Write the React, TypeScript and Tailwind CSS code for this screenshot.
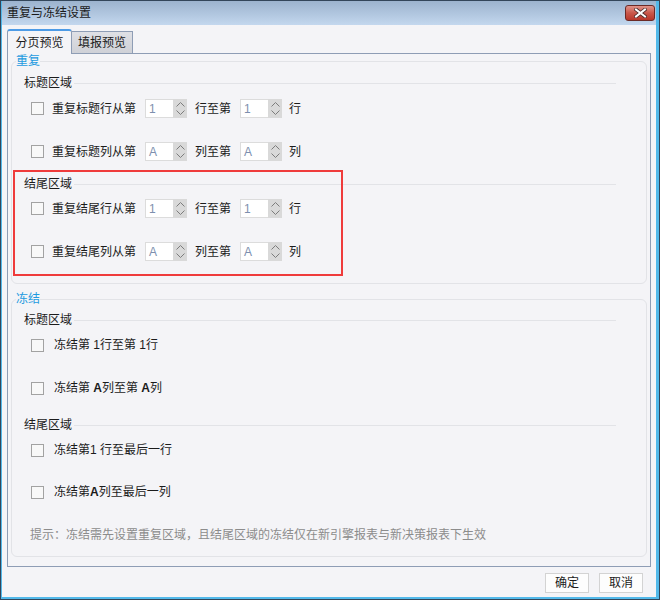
import React from 'react';

// 复选框
function Check() {
  return <div className="h-[13px] w-[13px] shrink-0 border border-[#a2a2a2] bg-[#f8f8f8]" />;
}

// 数字微调框
function Spinner({ value }: { value: string }) {
  return (
    <div className="flex h-[19px] w-[42px] shrink-0">
      <div className="flex w-[28px] items-center border border-r-0 border-[#dcdcdc] bg-white pl-[3px] font-['Liberation_Sans',sans-serif] text-[12px] text-[#7d8fae]">
        {value}
      </div>
      <div className="flex w-[14px] flex-col items-center justify-center gap-[3px] bg-[#d9d9d9]">
        <svg width="9" height="5" viewBox="0 0 9 5">
          <polyline points="0.5,4.5 4.5,0.5 8.5,4.5" fill="none" stroke="#7c7c7c" strokeWidth="1" />
        </svg>
        <svg width="9" height="5" viewBox="0 0 9 5">
          <polyline points="0.5,0.5 4.5,4.5 8.5,0.5" fill="none" stroke="#7c7c7c" strokeWidth="1" />
        </svg>
      </div>
    </div>
  );
}

function SpinRow({ label, v, mid, end }: { label: string; v: string; mid: string; end: string }) {
  return (
    <div className="flex h-[19px] items-center pl-[19px]">
      <Check />
      <span className="ml-[8px] w-[85px] leading-[16px]">{label}</span>
      <div className="ml-[8px]">
        <Spinner value={v} />
      </div>
      <span className="ml-[8px] w-[37px] leading-[16px]">{mid}</span>
      <div className="ml-[8px]">
        <Spinner value={v} />
      </div>
      <span className="ml-[7px] leading-[16px]">{end}</span>
    </div>
  );
}

function FreezeRow({ children }: { children: React.ReactNode }) {
  return (
    <div className="flex h-[18px] items-center pl-[19px]">
      <Check />
      <span className="ml-[10px] leading-[16px]">{children}</span>
    </div>
  );
}

function SubTitle({ text, className }: { text: string; className?: string }) {
  return (
    <div className={`flex h-[16px] items-center pl-[12px] pr-[30px] ${className ?? ''}`}>
      <span className="leading-[16px]">{text}</span>
      <div className="ml-[2px] h-px flex-1 bg-[#e2e3e7]" />
    </div>
  );
}

export default function App() {
  return (
    <div className="relative h-[600px] w-[660px] border border-[#33465a] bg-[#f4f4f7] font-['Liberation_Sans','Noto_Sans_CJK_SC',sans-serif] text-[12px] text-[#1b1b1b]">
      <div className="flex h-full flex-col border-b-2 border-l border-r-[3px] border-[#52b9ea]">
        {/* 标题栏 */}
        <div className="flex h-[24px] shrink-0 items-center justify-between bg-linear-to-b from-[#9cb3ce] to-[#c3d7ee] pl-[5px] pr-[1px]">
          <span className="leading-[16px] text-[#1a1a1a]">重复与冻结设置</span>
          <div className="flex h-[16px] w-[30px] items-center justify-center rounded-[3px] border border-[#6b2a26] bg-linear-to-b from-[#e0938a] via-[#c9574a] to-[#b8362a]">
            <svg width="13" height="10" viewBox="0 0 13 10">
              <path d="M2 1.5 L11 8.5 M11 1.5 L2 8.5" stroke="#4a2a2a" strokeWidth="3.6" strokeLinecap="square" />
              <path d="M2 1.5 L11 8.5 M11 1.5 L2 8.5" stroke="#ffffff" strokeWidth="2" strokeLinecap="square" />
            </svg>
          </div>
        </div>

        {/* 内容 */}
        <div className="flex flex-1 flex-col px-[5px] pt-[4px]">
          {/* 标签页 */}
          <div className="relative z-10 -mb-px flex h-[25px] items-end">
            <div className="flex h-[25px] w-[65px] items-center justify-center rounded-t-[3px] border-x border-t-2 border-x-[#8e9db5] border-t-[#4d9be6] bg-[#f4f4f7] pt-[1px] leading-[16px]">
              分页预览
            </div>
            <div className="flex h-[23px] w-[61px] items-center justify-center border-b border-r border-t border-[#8e9db5] bg-linear-to-b from-[#dfe0e5] to-[#cfd1d7] leading-[16px]">
              填报预览
            </div>
          </div>

          <div className="flex h-[514px] flex-col border border-[#8e9db5] px-[3px]">
            {/* 重复 */}
            <fieldset className="rounded-[6px] border border-[#e2e3e7] pb-[22px]">
              <legend className="ml-[4px] leading-[14px] text-[#1e9be0]">重复</legend>
              <SubTitle text="标题区域" className="mt-[7px]" />
              <div className="mt-[8px]">
                <SpinRow label="重复标题行从第" v="1" mid="行至第" end="行" />
              </div>
              <div className="mt-[24px]">
                <SpinRow label="重复标题列从第" v="A" mid="列至第" end="列" />
              </div>
              <SubTitle text="结尾区域" className="mt-[15px]" />
              <div className="mt-[7px]">
                <SpinRow label="重复结尾行从第" v="1" mid="行至第" end="行" />
              </div>
              <div className="mt-[24px]">
                <SpinRow label="重复结尾列从第" v="A" mid="列至第" end="列" />
              </div>
            </fieldset>

            {/* 冻结 */}
            <fieldset className="mt-[8px] rounded-[6px] border border-[#e2e3e7] pb-[13px]">
              <legend className="ml-[4px] leading-[14px] text-[#1e9be0]">冻结</legend>
              <SubTitle text="标题区域" className="mt-[6px]" />
              <div className="mt-[8px]">
                <FreezeRow>冻结第 1行至第 1行</FreezeRow>
              </div>
              <div className="mt-[25px]">
                <FreezeRow>
                  冻结第 <b className="font-bold">A</b>列至第 <b className="font-bold">A</b>列
                </FreezeRow>
              </div>
              <SubTitle text="结尾区域" className="mt-[20px]" />
              <div className="mt-[8px]">
                <FreezeRow>冻结第1 行至最后一行</FreezeRow>
              </div>
              <div className="mt-[24px]">
                <FreezeRow>
                  冻结第<b className="font-bold">A</b>列至最后一列
                </FreezeRow>
              </div>
              <div className="mt-[26px] pl-[18px] leading-[16px] text-[#8c8c8c]">
                提示：冻结需先设置重复区域，且结尾区域的冻结仅在新引擎报表与新决策报表下生效
              </div>
            </fieldset>
          </div>

          {/* 按钮 */}
          <div className="mt-[6px] flex justify-end gap-[10px] pr-[8px]">
            <button className="h-[20px] w-[44px] border border-[#d3d3d3] bg-[#fdfdfd] leading-[16px]">确定</button>
            <button className="h-[20px] w-[44px] border border-[#d3d3d3] bg-[#fdfdfd] leading-[16px]">取消</button>
          </div>
        </div>
      </div>

      {/* 红色标注框 */}
      <div className="pointer-events-none absolute left-[12px] top-[169px] h-[106px] w-[330px] border-2 border-[#ef3b3b]" />
    </div>
  );
}
